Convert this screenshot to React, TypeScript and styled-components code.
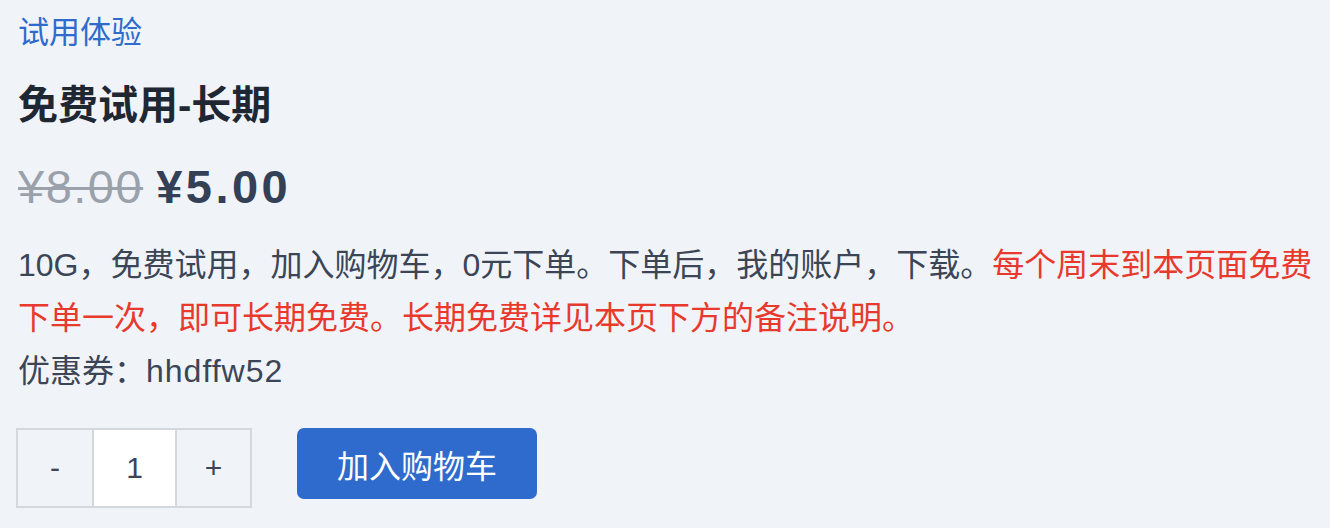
import styled, { createGlobalStyle } from 'styled-components'

const GlobalStyle = createGlobalStyle`
    body{
        margin: 0;
        background: #f0f4f9;
        font-family: "Liberation Sans", "Noto Sans CJK SC", sans-serif;
    }
`

const ProductStyled = styled.div`
    padding: 9px 10px 20px 18px;
    color: #3b4556;

    .category{
        display:block;
        color:#2f6bcc;
        font-size:31px;
        line-height:48px;
        text-decoration:none;
    }

    .title{
        margin:18px 0 0;
        font-size:40px;
        line-height:60px;
        font-weight:700;
        color:#1f2733;
    }

    .prices{
        display:flex;
        align-items:baseline;
        gap:13px;
        margin-top:20px;
        font-size:47px;
        line-height:64px;
    }

    .old-price{
        color:#9aa1ab;
        letter-spacing:1.5px;
        text-decoration:line-through;
        text-decoration-thickness:3px;
    }

    .new-price{
        color:#344055;
        font-weight:700;
        letter-spacing:3.5px;
    }

    .description{
        margin:20px 0 0;
        font-size:32px;
        line-height:53px;
    }

    .warning{
        color:#e8392c;
    }

    .code{
        letter-spacing:1px;
    }

    .actions{
        display:flex;
        align-items:flex-start;
        gap:45px;
        margin:30px 0 0 -2px;
    }
`

const Stepper = styled.div`
    display:flex;
    border:2px solid #d3d8df;
    height:76px;
`

const StepCell = styled.div<{ $white?: boolean; $width: number }>`
    display:flex;
    align-items:center;
    justify-content:center;
    width:${p => p.$width}px;
    background:${p => (p.$white ? '#ffffff' : 'transparent')};
    font-size:30px;
    color:#3b4556;
    & + &{
        border-left:2px solid #d3d8df;
    }
`

const CartButton = styled.button`
    width:240px;
    height:71px;
    border:none;
    border-radius:7px;
    background:#2f6bcc;
    color:#ffffff;
    font-family:inherit;
    font-size:32px;
    cursor:pointer;
`

function App() {
    return (
        <ProductStyled>
            <GlobalStyle />
            <a className='category' href='#'>试用体验</a>
            <h1 className='title'>免费试用-长期</h1>
            <div className='prices'>
                <span className='old-price'>¥8.00</span>
                <span className='new-price'>¥5.00</span>
            </div>
            <p className='description'>
                10G，免费试用，加入购物车，0元下单。下单后，我的账户，下载。
                <span className='warning'>每个周末到本页面免费下单一次，即可长期免费。长期免费详见本页下方的备注说明。</span>
                <br />
                优惠券：<span className='code'>hhdffw52</span>
            </p>
            <div className='actions'>
                <Stepper>
                    <StepCell $width={74}>-</StepCell>
                    <StepCell $width={81} $white>1</StepCell>
                    <StepCell $width={73}>+</StepCell>
                </Stepper>
                <CartButton>加入购物车</CartButton>
            </div>
        </ProductStyled>
    )
}

export default App
